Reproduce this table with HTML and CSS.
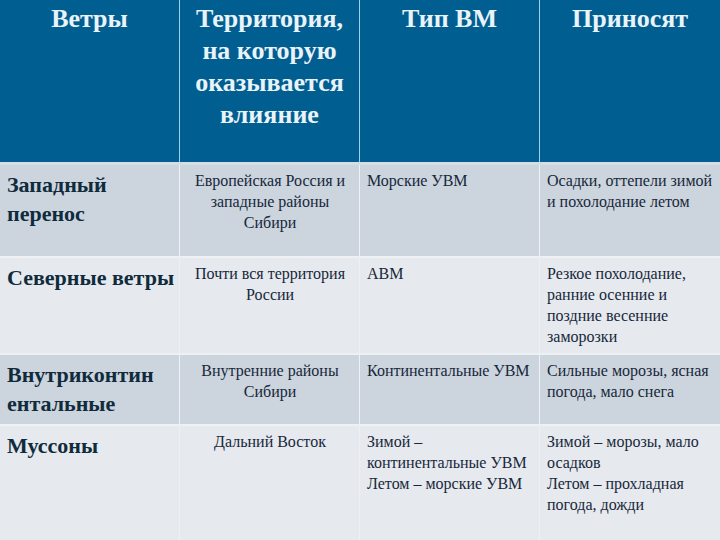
FILE: index.html
```html
<!DOCTYPE html>
<html>
<head>
<meta charset="utf-8">
<link rel="stylesheet" href="styles.css">
</head>
<body>
<div class="winds">
  <div class="row head">
    <p class="cell c1">Ветры</p>
    <p class="cell c2">Территория, на которую оказывается влияние</p>
    <p class="cell c3">Тип ВМ</p>
    <p class="cell c4">Приносят</p>
  </div>
  <div class="row odd r1">
    <p class="cell c1 name">Западный перенос</p>
    <p class="cell c2 center">Европейская Россия и западные районы Сибири</p>
    <p class="cell c3">Морские УВМ</p>
    <p class="cell c4">Осадки, оттепели зимой и похолодание летом</p>
  </div>
  <div class="row even r2">
    <p class="cell c1 name">Северные ветры</p>
    <p class="cell c2 center">Почти вся территория России</p>
    <p class="cell c3">АВМ</p>
    <p class="cell c4">Резкое похолодание, ранние осенние и поздние весенние заморозки</p>
  </div>
  <div class="row odd r3">
    <p class="cell c1 name">Внутриконтин ентальные</p>
    <p class="cell c2 center">Внутренние районы Сибири</p>
    <p class="cell c3">Континентальные УВМ</p>
    <p class="cell c4">Сильные морозы, ясная погода, мало снега</p>
  </div>
  <div class="row even r4">
    <p class="cell c1 name">Муссоны</p>
    <p class="cell c2 center">Дальний Восток</p>
    <p class="cell c3">Зимой – континентальные УВМ<br>Летом – морские УВМ</p>
    <p class="cell c4">Зимой – морозы, мало осадков<br>Летом – прохладная погода, дожди</p>
  </div>
</div>
</body>
</html>
```
FILE: styles.css
```css
html, body {
  margin: 0;
  padding: 0;
  background: #e6e9ee;
}
.winds {
  width: 720px;
  height: 540px;
  display: flex;
  flex-direction: column;
  background: #eef1f4;
  overflow: hidden;
}
.row {
  display: grid;
  grid-template-columns: 179px 179px 179px 180px;
  column-gap: 1px;
  background: #edf1f5;
}
.cell {
  margin: 0;
  color: #16283a;
  font-size: 16px;
  line-height: 21px;
  padding: 5px 6px 0 7px;
}
.c1 { font-family: Tinos, "Liberation Serif", serif; }
.c2 { font-family: "Times New Roman", Tinos, serif; }
.c3 { font-family: serif; }
.c4 { font-family: "Liberation Serif", Tinos, serif; }
.head {
  height: 162px;
  border-bottom: 3px solid #d6dde4;
  background: #9fd0ea;
}
.head .cell {
  background: #015e91;
  color: #e9f3f8;
  font-size: 26px;
  font-weight: bold;
  line-height: 32px;
  text-align: center;
  padding: 3px 4px 0;
}
.odd .cell { background: #ccd4de; }
.even .cell { background: #e6e9ee; }
.r1 { height: 91px; border-bottom: 2px solid #eef1f4; }
.r2 { height: 95px; border-bottom: 2px solid #eef1f4; }
.r3 { height: 69px; border-bottom: 2px solid #eef1f4; }
.r4 { flex: 1; }
.cell.name {
  font-size: 22px;
  font-weight: bold;
  line-height: 29px;
  color: #0f2b3c;
  padding: 5px 4px 0 7px;
}
.cell.center { text-align: center; }
```
